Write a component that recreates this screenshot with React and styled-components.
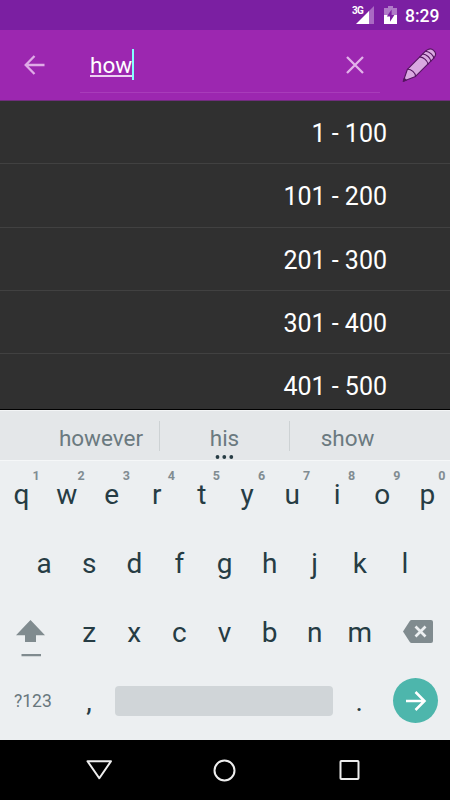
import styled, { createGlobalStyle } from "styled-components";

const colors = {
    statusBar: "#7b1fa2",
    primary: "#9c27b0",
    list: "#303030",
    keyboard: "#eceff1",
    strip: "#e4e7e9",
    key: "#263c44",
    muted: "#6b7a80",
    keyIcon: "#808b8f",
    action: "#4db6ac",
};

const GlobalStyle = createGlobalStyle`
    * {
        box-sizing: border-box;
    }
    body {
        margin: 0;
        background: #000;
        overflow: hidden;
    }
`;

const Screen = styled.div`
    width: 450px;
    height: 800px;
    display: flex;
    flex-direction: column;
    overflow: hidden;
    font-family: Roboto, "Noto Sans", sans-serif;
    svg {
        display: block;
        flex: none;
    }
`;

const StatusBar = styled.header`
    height: 30px;
    flex: none;
    display: flex;
    justify-content: flex-end;
    align-items: center;
    padding-right: 10px;
    background: ${colors.statusBar};
`;

const NetworkLabel = styled.span`
    align-self: flex-start;
    margin: 5px -7px 0 0;
    font-size: 10px;
    line-height: 11px;
    font-weight: 700;
    letter-spacing: -0.8px;
    color: #fff;
    z-index: 1;
`;

const BatteryIcon = styled.svg`
    margin-left: 10px;
`;

const Clock = styled.span`
    width: 35px;
    margin-left: 8px;
    font-size: 17.5px;
    line-height: 30px;
    font-weight: 500;
    color: #fff;
    white-space: nowrap;
    padding-top: 1px;
`;

const AppBar = styled.div`
    height: 71px;
    flex: none;
    display: flex;
    align-items: center;
    padding: 0 10px 0 24px;
    background: ${colors.primary};
    border-bottom: 1px solid #702d7c;
`;

const SearchField = styled.div`
    width: 300px;
    height: 45px;
    flex: none;
    margin: 10px 22px 0 35px;
    padding: 0 16px 0 10px;
    display: flex;
    align-items: center;
    justify-content: space-between;
    border-bottom: 1px solid #a83cba;
`;

const Query = styled.div`
    display: flex;
    align-items: flex-start;
    height: 30px;
    margin-top: -11px;
`;

const QueryText = styled.span`
    height: 28px;
    width: 42px;
    font-size: 22.5px;
    line-height: 33px;
    color: #fff;
    border-bottom: 2px solid #ecd0f1;
`;

const Cursor = styled.span`
    width: 2px;
    height: 31px;
    background: #84ffff;
`;

const ClearIcon = styled.svg`
    margin-top: -9px;
`;

const List = styled.main`
    height: 309px;
    flex: none;
    overflow: hidden;
    background: ${colors.list};
    border-bottom: 1px solid #000;
`;

const ListRow = styled.div`
    height: 63.3px;
    padding: 2px 63px 0 0;
    font-size: 25px;
    line-height: 61px;
    text-align: right;
    color: #fff;
    border-bottom: 1px solid #414141;
`;

const Suggestions = styled.div`
    height: 51px;
    flex: none;
    display: flex;
    align-items: center;
    padding: 0 38px 0 43px;
    background: ${colors.strip};
    border-top: 1px solid #f3f5f6;
    border-bottom: 1px solid #f5f7f8;
`;

const Suggestion = styled.div`
    width: ${(props) => props.$width}px;
    height: 30px;
    position: relative;
    font-size: 22.5px;
    line-height: 34px;
    text-align: center;
    color: ${colors.muted};
    border-right: ${(props) => (props.$last ? "none" : "1px solid #cdd2d4")};
`;

const MoreDots = styled.svg`
    position: absolute;
    left: 55px;
    top: 34px;
`;

const Keyboard = styled.section`
    height: 279px;
    flex: none;
    background: ${colors.keyboard};
`;

const KeyRow = styled.div`
    height: 69px;
    display: flex;
    justify-content: ${(props) => (props.$bottom ? "flex-start" : "center")};
`;

const Key = styled.div`
    width: 45.1px;
    flex: none;
    position: relative;
    padding-right: 1px;
    font-size: 28px;
    line-height: 68px;
    text-align: center;
    color: ${colors.key};
`;

const Hint = styled.span`
    position: absolute;
    right: 5px;
    top: 8px;
    font-size: 12.5px;
    line-height: 14px;
    font-weight: 700;
    color: #818c91;
`;

const IconKey = styled.div`
    width: 67px;
    flex: none;
    padding: 21px 0 0 ${(props) => props.$left}px;
`;

const SymbolsKey = styled.div`
    width: 67px;
    flex: none;
    padding-left: 14px;
    font-size: 17.5px;
    line-height: 66px;
    color: #68777d;
`;

const SpaceKey = styled.div`
    width: 218px;
    height: 30px;
    margin: 18px 4px 0 3px;
    flex: none;
    border-radius: 4px;
    background: #d0d5d8;
`;

const EnterKey = styled.div`
    width: 45px;
    height: 45px;
    margin: 10px 0 0 11px;
    flex: none;
    display: flex;
    align-items: center;
    justify-content: center;
    border-radius: 50%;
    background: ${colors.action};
`;

const NavBar = styled.nav`
    height: 60px;
    flex: none;
    display: flex;
    align-items: center;
    justify-content: space-between;
    padding: 0 87px 0 86px;
    background: #000;
`;

const ranges = ["1 - 100", "101 - 200", "201 - 300", "301 - 400", "401 - 500"];

function Signal() {
    return (
        <svg width="18" height="18" viewBox="0 0 18 18">
            <path d="M12.5 5.5 18 0v18h-5.5z" fill="#a96ac3" />
            <path d="M0 18 13 5v13z" fill="#fff" />
        </svg>
    );
}

function Battery() {
    return (
        <BatteryIcon width="13" height="18" viewBox="0 0 13 18">
            <path d="M4 0h5v2h4v7H0V2h4z" fill="#b07ac8" />
            <path d="M0 9h13v9H0z" fill="#fff" />
            <path d="M7.6 3.5 2.8 10.5h3.2v5.3l4.4-6.8H7.6z" fill="#7b1fa2" />
        </BatteryIcon>
    );
}

function Pencil() {
    return (
        <svg width="36" height="36" viewBox="0 0 36 36">
            <g
                fill="#d9a8e0"
                stroke="#551461"
                strokeWidth="1.1"
                strokeLinejoin="round"
                strokeLinecap="round"
            >
                <path d="M1.3 34.3 5.4 22.3 23.5 4.2C26 1.8 29 1 31.6 3.300s2.500 5.200.2 7.800L13.500 29.400z" />
                <path
                    d="M5.400 22.300c3.800-.2 8.200 3.500 8.100 7.100M17.700 9.900c4.200.5 7.700 3.700 8.300 7.200M20.600 7c4.200.5 7.700 3.700 8.300 7.200M23.500 4.200c4.200.5 7.700 3.600 8.300 6.900"
                    fill="none"
                />
                <path d="m1.300 34.300 1-3 2 1.900z" fill="#551461" />
            </g>
        </svg>
    );
}

function Letters({ letters, hints = "" }) {
    return letters.split("").map((letter, index) => (
        <Key key={letter}>
            {letter}
            {hints[index] && <Hint>{hints[index]}</Hint>}
        </Key>
    ));
}

function App() {
    return (
        <Screen>
            <GlobalStyle />
            <StatusBar>
                <NetworkLabel>3G</NetworkLabel>
                <Signal />
                <Battery />
                <Clock>8:29</Clock>
            </StatusBar>
            <AppBar>
                <svg width="21" height="20" viewBox="0 0 21 20">
                    <path
                        d="M20.5 10H2M10.5 1 1.7 10l8.8 9"
                        fill="none"
                        stroke="#dfabe7"
                        strokeWidth="2.3"
                    />
                </svg>
                <SearchField>
                    <Query>
                        <QueryText>how</QueryText>
                        <Cursor />
                    </Query>
                    <ClearIcon width="18" height="18" viewBox="0 0 18 18">
                        <path
                            d="m1 1 16 16M17 1 1 17"
                            fill="none"
                            stroke="#e2b3ea"
                            strokeWidth="2.3"
                        />
                    </ClearIcon>
                </SearchField>
                <Pencil />
            </AppBar>
            <List>
                {ranges.map((range) => (
                    <ListRow key={range}>{range}</ListRow>
                ))}
            </List>
            <Suggestions>
                <Suggestion $width={117}>however</Suggestion>
                <Suggestion $width={130}>
                    his
                    <MoreDots width="20" height="4" viewBox="0 0 20 4">
                        <g fill={colors.key}>
                            <circle cx="2.5" cy="2" r="1.9" />
                            <circle cx="9.3" cy="2" r="1.9" />
                            <circle cx="16.3" cy="2" r="1.9" />
                        </g>
                    </MoreDots>
                </Suggestion>
                <Suggestion $width={115} $last>
                    show
                </Suggestion>
            </Suggestions>
            <Keyboard>
                <KeyRow>
                    <Letters letters="qwertyuiop" hints="1234567890" />
                </KeyRow>
                <KeyRow>
                    <Letters letters="asdfghjkl" />
                </KeyRow>
                <KeyRow>
                    <IconKey $left={16}>
                        <svg width="30" height="38" viewBox="0 0 30 38">
                            <path
                                d="M14.5 0 29 15.3h-9V22H9v-6.700H0zM5.500 34H25v2.300H5.500z"
                                fill={colors.keyIcon}
                            />
                        </svg>
                    </IconKey>
                    <Letters letters="zxcvbnm" />
                    <IconKey $left={20}>
                        <svg width="30" height="23" viewBox="0 0 30 23">
                            <path
                                d="M8.500 0H28q2 0 2 2v19q0 2-2 2H8.500q-1 0-1.700-1L0 11.500 6.800 1q.7-1 1.700-1z"
                                fill={colors.keyIcon}
                            />
                            <path
                                d="m12.500 6.500 10 10m0-10-10 10"
                                stroke={colors.keyboard}
                                strokeWidth="2.700"
                            />
                        </svg>
                    </IconKey>
                </KeyRow>
                <KeyRow $bottom>
                    <SymbolsKey>?123</SymbolsKey>
                    <Key>,</Key>
                    <SpaceKey />
                    <Key>.</Key>
                    <EnterKey>
                        <svg width="22" height="20" viewBox="0 0 22 20">
                            <path
                                d="M1 10h18M10.500 1 19.500 10l-9 9"
                                fill="none"
                                stroke="#fff"
                                strokeWidth="2.500"
                            />
                        </svg>
                    </EnterKey>
                </KeyRow>
            </Keyboard>
            <NavBar>
                <svg width="27" height="20" viewBox="0 0 27 20">
                    <path
                        d="M1.500 1.200h23.500L13.300 18.300z"
                        fill="none"
                        stroke="#eee"
                        strokeWidth="2"
                        strokeLinejoin="round"
                    />
                </svg>
                <svg width="23" height="23" viewBox="0 0 23 23">
                    <circle
                        cx="11.5"
                        cy="11.5"
                        r="10"
                        fill="none"
                        stroke="#eee"
                        strokeWidth="2"
                    />
                </svg>
                <svg width="27" height="20" viewBox="0 0 27 20">
                    <rect
                        x="4.5"
                        y="1"
                        width="18"
                        height="18"
                        rx="0.8"
                        fill="none"
                        stroke="#eee"
                        strokeWidth="2"
                    />
                </svg>
            </NavBar>
        </Screen>
    );
}

export default App;
